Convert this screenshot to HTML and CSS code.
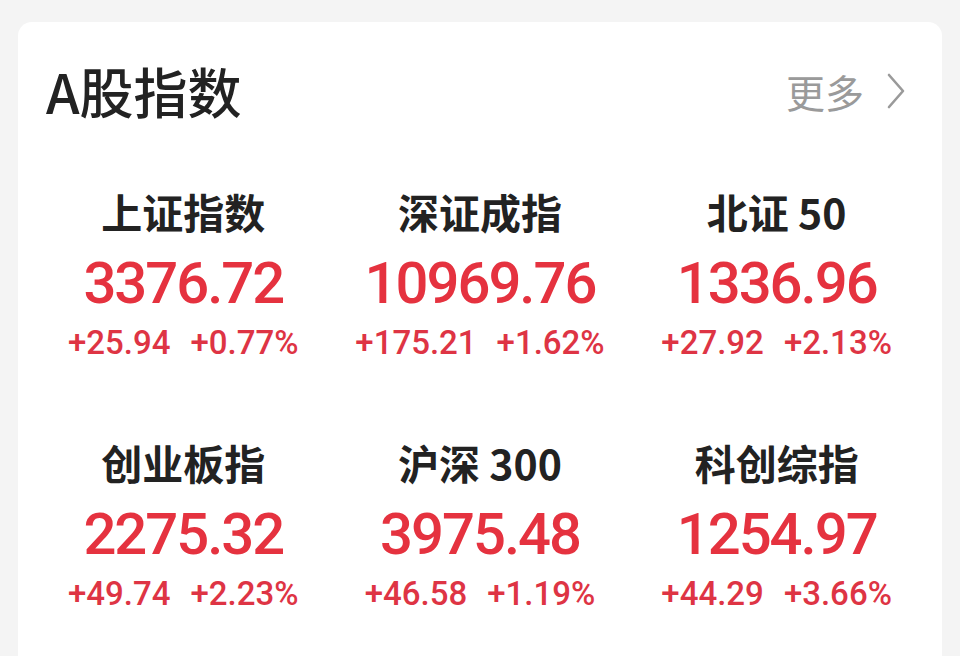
FILE: index.html
```html
<!DOCTYPE html>
<html lang="zh-CN">
<head>
<meta charset="utf-8">
<title>A股指数</title>
<link rel="stylesheet" href="styles.css">
</head>
<body>
<div class="card">
  <div class="header">
    <div class="title">A股指数</div>
    <div class="more">
      <span>更多</span>
      <svg class="chev" width="20" height="36" viewBox="0 0 20 36"><polyline points="3,2 17,18 3,34" fill="none" stroke="#9a9a9a" stroke-width="2.6" stroke-linecap="round" stroke-linejoin="round"/></svg>
    </div>
  </div>
  <div class="grid">
    <div class="cell">
      <div class="name">上证指数</div>
      <div class="value">3376.72</div>
      <div class="change"><span>+25.94</span><span>+0.77%</span></div>
    </div>
    <div class="cell">
      <div class="name">深证成指</div>
      <div class="value">10969.76</div>
      <div class="change"><span>+175.21</span><span>+1.62%</span></div>
    </div>
    <div class="cell">
      <div class="name">北证 50</div>
      <div class="value">1336.96</div>
      <div class="change"><span>+27.92</span><span>+2.13%</span></div>
    </div>
    <div class="cell">
      <div class="name">创业板指</div>
      <div class="value">2275.32</div>
      <div class="change"><span>+49.74</span><span>+2.23%</span></div>
    </div>
    <div class="cell">
      <div class="name">沪深 300</div>
      <div class="value">3975.48</div>
      <div class="change"><span>+46.58</span><span>+1.19%</span></div>
    </div>
    <div class="cell">
      <div class="name">科创综指</div>
      <div class="value">1254.97</div>
      <div class="change"><span>+44.29</span><span>+3.66%</span></div>
    </div>
  </div>
</div>
</body>
</html>
```

FILE: styles.css
```css
html, body {
  margin: 0;
  padding: 0;
  background: #f4f4f4;
  height: 656px;
  overflow: hidden;
}
body {
  font-family: "Noto Sans CJK SC", "Noto Sans", sans-serif;
  padding-top: 22px;
  box-sizing: border-box;
}
.card {
  margin: 0 18px;
  background: #ffffff;
  border-radius: 14px 14px 0 0;
  height: 634px;
}
.header {
  display: flex;
  justify-content: space-between;
  align-items: center;
  height: 138px;
  padding: 0 36px 0 28px;
}
.title {
  font-size: 54px;
  font-weight: 500;
  color: #222222;
  line-height: 60px;
}
.more {
  display: flex;
  align-items: center;
  gap: 22px;
  color: #9a9a9a;
  font-size: 39px;
  line-height: 44px;
}
.chev {
  display: block;
}
.grid {
  display: grid;
  grid-template-columns: repeat(3, 1fr);
  row-gap: 48px;
  padding: 0 17px;
}
.cell {
  display: flex;
  flex-direction: column;
  align-items: center;
  padding-top: 26px;
}
.name {
  font-size: 41px;
  font-weight: 700;
  color: #222222;
  line-height: 50px;
  height: 50px;
}
.value {
  margin-top: 12px;
  font-family: Roboto, "Noto Sans", sans-serif;
  font-size: 58px;
  font-weight: 500;
  letter-spacing: -2px;
  color: #e5323f;
  line-height: 70px;
  height: 70px;
}
.change {
  margin-top: 5px;
  display: flex;
  gap: 20px;
  font-family: Roboto, "Noto Sans", sans-serif;
  font-size: 33px;
  font-weight: 500;
  color: #de3444;
  line-height: 40px;
  height: 40px;
}
```
